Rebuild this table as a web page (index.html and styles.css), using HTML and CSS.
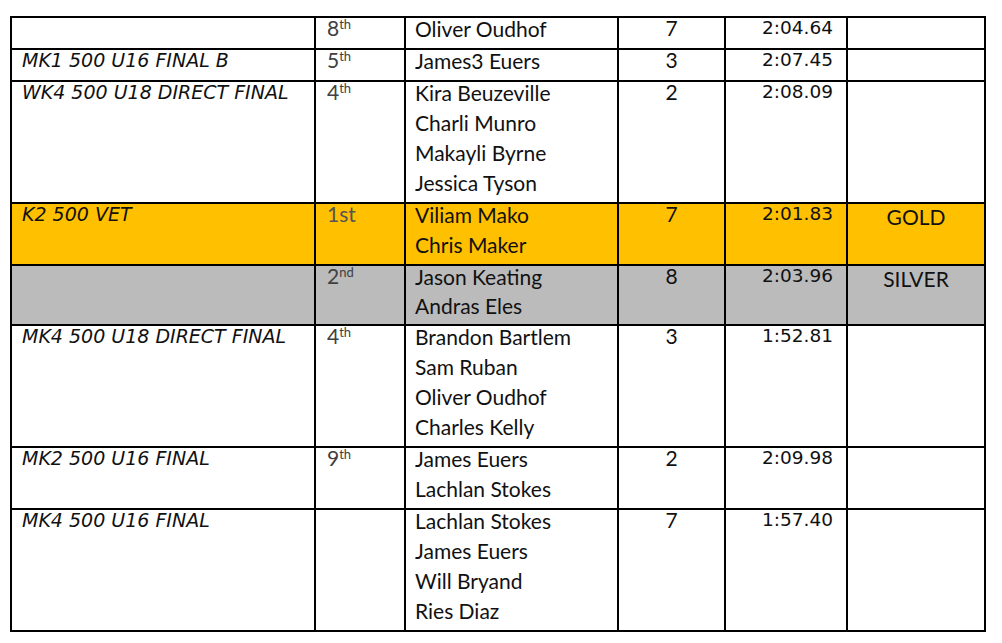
FILE: index.html
```html
<!DOCTYPE html>
<html>
<head>
<meta charset="utf-8">
<link rel="stylesheet" href="styles.css">
</head>
<body>
<table class="results">
  <colgroup>
    <col class="c-event"><col class="c-place"><col class="c-crew"><col class="c-lane"><col class="c-time"><col class="c-medal">
  </colgroup>
  <tbody>
    <tr>
      <td class="event"><div class="in"></div></td>
      <td class="place"><div class="in">8<sup>th</sup></div></td>
      <td class="crew"><div class="in"><div>Oliver Oudhof</div></div></td>
      <td class="lane"><div class="in">7</div></td>
      <td class="time"><div class="in">2:04.64</div></td>
      <td class="medal"><div class="in"></div></td>
    </tr>
    <tr>
      <td class="event"><div class="in">MK1 500 U16 FINAL B</div></td>
      <td class="place"><div class="in">5<sup>th</sup></div></td>
      <td class="crew"><div class="in"><div>James3 Euers</div></div></td>
      <td class="lane"><div class="in">3</div></td>
      <td class="time"><div class="in">2:07.45</div></td>
      <td class="medal"><div class="in"></div></td>
    </tr>
    <tr>
      <td class="event"><div class="in">WK4 500 U18 DIRECT FINAL</div></td>
      <td class="place"><div class="in">4<sup>th</sup></div></td>
      <td class="crew"><div class="in"><div>Kira Beuzeville</div><div>Charli Munro</div><div>Makayli Byrne</div><div>Jessica Tyson</div></div></td>
      <td class="lane"><div class="in">2</div></td>
      <td class="time"><div class="in">2:08.09</div></td>
      <td class="medal"><div class="in"></div></td>
    </tr>
    <tr class="gold">
      <td class="event"><div class="in">K2 500 VET</div></td>
      <td class="place"><div class="in">1st</div></td>
      <td class="crew"><div class="in"><div>Viliam Mako</div><div>Chris Maker</div></div></td>
      <td class="lane"><div class="in">7</div></td>
      <td class="time"><div class="in">2:01.83</div></td>
      <td class="medal"><div class="in">GOLD</div></td>
    </tr>
    <tr class="silver">
      <td class="event"><div class="in"></div></td>
      <td class="place"><div class="in">2<sup>nd</sup></div></td>
      <td class="crew"><div class="in"><div>Jason Keating</div><div>Andras Eles</div></div></td>
      <td class="lane"><div class="in">8</div></td>
      <td class="time"><div class="in">2:03.96</div></td>
      <td class="medal"><div class="in">SILVER</div></td>
    </tr>
    <tr>
      <td class="event"><div class="in">MK4 500 U18 DIRECT FINAL</div></td>
      <td class="place"><div class="in">4<sup>th</sup></div></td>
      <td class="crew"><div class="in"><div>Brandon Bartlem</div><div>Sam Ruban</div><div>Oliver Oudhof</div><div>Charles Kelly</div></div></td>
      <td class="lane"><div class="in">3</div></td>
      <td class="time"><div class="in">1:52.81</div></td>
      <td class="medal"><div class="in"></div></td>
    </tr>
    <tr>
      <td class="event"><div class="in">MK2 500 U16 FINAL</div></td>
      <td class="place"><div class="in">9<sup>th</sup></div></td>
      <td class="crew"><div class="in"><div>James Euers</div><div>Lachlan Stokes</div></div></td>
      <td class="lane"><div class="in">2</div></td>
      <td class="time"><div class="in">2:09.98</div></td>
      <td class="medal"><div class="in"></div></td>
    </tr>
    <tr>
      <td class="event"><div class="in">MK4 500 U16 FINAL</div></td>
      <td class="place"><div class="in"></div></td>
      <td class="crew"><div class="in"><div>Lachlan Stokes</div><div>James Euers</div><div>Will Bryand</div><div>Ries Diaz</div></div></td>
      <td class="lane"><div class="in">7</div></td>
      <td class="time"><div class="in">1:57.40</div></td>
      <td class="medal"><div class="in"></div></td>
    </tr>
  </tbody>
</table>
</body>
</html>
```
FILE: styles.css
```css
body {
  margin: 0;
  background: #ffffff;
}

.results {
  border-collapse: collapse;
  table-layout: fixed;
  width: 976px;
  margin: 16px 0 0 10px;
  font-family: "Lato", "Carlito", "Liberation Sans", sans-serif;
  font-size: 21px;
  color: #111;
}

.c-event { width: 304px; }
.c-place { width: 90px; }
.c-crew { width: 213px; }
.c-lane { width: 107px; }
.c-time { width: 122px; }
.c-medal { width: 138px; }

.results td {
  border: 2px solid #000;
  vertical-align: top;
  padding: 0;
  line-height: 30px;
  height: 30px;
}

.in {
  margin-top: -4px;
  padding-bottom: 4px;
  white-space: nowrap;
}

.event {
  font-family: "DejaVu Sans", "Verdana", sans-serif;
  font-style: italic;
  font-size: 19px;
}
.event .in {
  padding-left: 10px;
  margin-top: -5px;
  padding-bottom: 5px;
}

.place {
  color: #404040;
}
.place .in {
  padding-left: 11px;
  margin-top: -5px;
  padding-bottom: 5px;
}
.place sup {
  font-size: 13px;
  line-height: 0;
  vertical-align: 7px;
}

.crew .in {
  padding-left: 9px;
}

.lane {
  text-align: center;
}
.lane .in {
  margin-top: -5px;
  padding-bottom: 5px;
}

.time {
  font-family: "DejaVu Sans", "Verdana", sans-serif;
  font-size: 18.5px;
  text-align: right;
}
.time .in {
  padding-right: 13px;
  margin-top: -5px;
  padding-bottom: 5px;
}

.medal {
  text-align: center;
}
.medal .in {
  margin-top: -2px;
  padding-bottom: 2px;
}

.gold td {
  background: #ffc000;
}
.gold .place {
  color: #555;
}

.silver td {
  background: #bbbbbb;
}
.silver .crew .in div {
  line-height: 29px;
}
```
